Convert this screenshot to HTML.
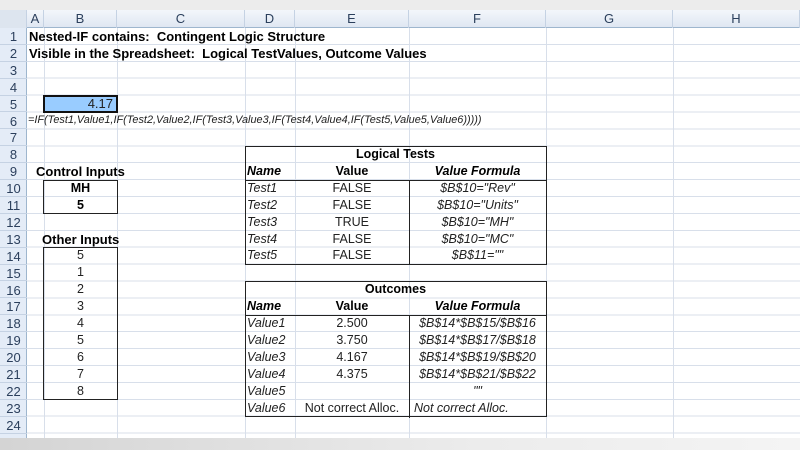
<!DOCTYPE html>
<html><head><style>
*{margin:0;padding:0;box-sizing:border-box}
body{width:800px;height:450px;overflow:hidden;background:#fff;font-family:"Liberation Sans",Arial,sans-serif;position:relative}
#grid{position:absolute;left:0;top:27.7px;width:800px;height:412px;
background-image:repeating-linear-gradient(to bottom,transparent 0,transparent 15.9px,#d8dfea 15.9px,#d8dfea 16.9px);}
.v{position:absolute;top:10px;height:430px;width:1px;background:#d8dfea}
#top{position:absolute;left:0;top:0;width:800px;height:10px;background:#ececec}
#colh{position:absolute;left:0;top:10px;width:800px;height:18px;background:linear-gradient(#f3f6fb,#dfe7f2);border-bottom:1px solid #9eb6ce}
.ch{position:absolute;top:10px;height:18px;line-height:18px;text-align:center;font-size:13px;color:#2b3f5c;border-right:1px solid #c5d2e3}
#rowh{position:absolute;left:0;top:28px;width:27px;height:412px;background:#e4ecf7;border-right:1px solid #9eb6ce}
.rh{position:absolute;left:0;width:27px;height:16.9px;line-height:17.5px;text-align:center;font-size:13px;color:#2b3f5c;border-bottom:1px solid #c5d2e3}
.t{position:absolute;height:16.9px;line-height:17.8px;font-size:12.5px;color:#222;white-space:nowrap}
.b{font-weight:bold;color:#000}
.i{font-style:italic}
.c{text-align:center}
.box{position:absolute;border:1px solid #222}
.ln{position:absolute;background:#222}
#bot{position:absolute;left:0;top:438px;width:800px;height:12px;background:linear-gradient(90deg,#d4d4d4,#ececec 60%,#f4f4f4)}
</style></head><body>
<div id="top"></div>
<div id="grid"></div>
<div class="v" style="left:44px"></div><div class="v" style="left:117px"></div><div class="v" style="left:245px"></div><div class="v" style="left:295px"></div><div class="v" style="left:409px"></div><div class="v" style="left:546px"></div><div class="v" style="left:673px"></div>
<div id="colh"></div>
<div class="ch" style="left:0;width:27px;background:#dde5ef"></div>
<div class="ch" style="left:27px;width:17px">A</div>
<div class="ch" style="left:44px;width:73px">B</div>
<div class="ch" style="left:117px;width:128px">C</div>
<div class="ch" style="left:245px;width:50px">D</div>
<div class="ch" style="left:295px;width:114px">E</div>
<div class="ch" style="left:409px;width:137px">F</div>
<div class="ch" style="left:546px;width:127px">G</div>
<div class="ch" style="left:673px;width:127px">H</div>
<div id="rowh">
<div class="rh" style="top:0">1</div><div class="rh" style="top:16.9px">2</div><div class="rh" style="top:33.8px">3</div><div class="rh" style="top:50.7px">4</div><div class="rh" style="top:67.6px">5</div><div class="rh" style="top:84.5px">6</div><div class="rh" style="top:101.4px">7</div><div class="rh" style="top:118.3px">8</div><div class="rh" style="top:135.2px">9</div><div class="rh" style="top:152.1px">10</div><div class="rh" style="top:169px">11</div><div class="rh" style="top:185.9px">12</div><div class="rh" style="top:202.8px">13</div><div class="rh" style="top:219.7px">14</div><div class="rh" style="top:236.6px">15</div><div class="rh" style="top:253.5px">16</div><div class="rh" style="top:270.4px">17</div><div class="rh" style="top:287.3px">18</div><div class="rh" style="top:304.2px">19</div><div class="rh" style="top:321.1px">20</div><div class="rh" style="top:338px">21</div><div class="rh" style="top:354.9px">22</div><div class="rh" style="top:371.8px">23</div><div class="rh" style="top:388.7px">24</div><div class="rh" style="top:405.6px">25</div>
</div>

<div class="t b" style="left:29px;top:27.7px;font-size:13px">Nested-IF contains:&nbsp; Contingent Logic Structure</div>
<div class="t b" style="left:29px;top:44.6px;font-size:13px">Visible in the Spreadsheet:&nbsp; Logical TestValues, Outcome Values</div>
<div style="position:absolute;left:43px;top:94.5px;width:75px;height:18px;background:#99ccff;border:2px solid #111"></div>
<div class="t" style="left:44px;top:95.3px;width:69px;text-align:right;font-size:13px">4.17</div>
<div class="t i" style="left:28px;top:112.2px;font-size:10.9px">=IF(Test1,Value1,IF(Test2,Value2,IF(Test3,Value3,IF(Test4,Value4,IF(Test5,Value5,Value6)))))</div>

<div class="t b" style="left:36px;top:162.9px;font-size:13px">Control Inputs</div>
<div class="box" style="left:43px;top:179.8px;width:75px;height:34px"></div>
<div class="t b c" style="left:44px;top:179.8px;width:73px">MH</div>
<div class="t b c" style="left:44px;top:196.7px;width:73px">5</div>
<div class="t b" style="left:42px;top:230.5px;font-size:13px">Other Inputs</div>
<div class="box" style="left:43px;top:247.4px;width:75px;height:153px"></div>
<div class="t c" style="left:44px;top:247.4px;width:73px">5</div>
<div class="t c" style="left:44px;top:264.3px;width:73px">1</div>
<div class="t c" style="left:44px;top:281.2px;width:73px">2</div>
<div class="t c" style="left:44px;top:298.1px;width:73px">3</div>
<div class="t c" style="left:44px;top:315px;width:73px">4</div>
<div class="t c" style="left:44px;top:331.9px;width:73px">5</div>
<div class="t c" style="left:44px;top:348.8px;width:73px">6</div>
<div class="t c" style="left:44px;top:365.7px;width:73px">7</div>
<div class="t c" style="left:44px;top:382.6px;width:73px">8</div>

<div class="box" style="left:245px;top:146px;width:302px;height:119px;background:transparent"></div>
<div class="ln" style="left:245px;top:179.6px;width:302px;height:1px"></div>
<div class="ln" style="left:409px;top:179.6px;width:1px;height:85px"></div>
<div class="t b c" style="left:245px;top:146px;width:301px">Logical Tests</div>
<div class="t b i" style="left:247px;top:162.9px">Name</div>
<div class="t b c" style="left:295px;top:162.9px;width:114px">Value</div>
<div class="t b i c" style="left:409px;top:162.9px;width:137px">Value Formula</div>
<div class="t i" style="left:247px;top:179.8px">Test1</div><div class="t c" style="left:295px;top:179.8px;width:114px">FALSE</div><div class="t i c" style="left:409px;top:179.8px;width:137px">$B$10="Rev"</div>
<div class="t i" style="left:247px;top:196.7px">Test2</div><div class="t c" style="left:295px;top:196.7px;width:114px">FALSE</div><div class="t i c" style="left:409px;top:196.7px;width:137px">$B$10="Units"</div>
<div class="t i" style="left:247px;top:213.6px">Test3</div><div class="t c" style="left:295px;top:213.6px;width:114px">TRUE</div><div class="t i c" style="left:409px;top:213.6px;width:137px">$B$10="MH"</div>
<div class="t i" style="left:247px;top:230.5px">Test4</div><div class="t c" style="left:295px;top:230.5px;width:114px">FALSE</div><div class="t i c" style="left:409px;top:230.5px;width:137px">$B$10="MC"</div>
<div class="t i" style="left:247px;top:247.4px">Test5</div><div class="t c" style="left:295px;top:247.4px;width:114px">FALSE</div><div class="t i c" style="left:409px;top:247.4px;width:137px">$B$11=""</div>

<div class="box" style="left:245px;top:281.2px;width:302px;height:136px"></div>
<div class="ln" style="left:245px;top:314.8px;width:302px;height:1px"></div>
<div class="ln" style="left:409px;top:314.8px;width:1px;height:103px"></div>
<div class="t b c" style="left:245px;top:281.2px;width:301px">Outcomes</div>
<div class="t b i" style="left:247px;top:298.1px">Name</div>
<div class="t b c" style="left:295px;top:298.1px;width:114px">Value</div>
<div class="t b i c" style="left:409px;top:298.1px;width:137px">Value Formula</div>
<div class="t i" style="left:247px;top:315px">Value1</div><div class="t c" style="left:295px;top:315px;width:114px">2.500</div><div class="t i c" style="left:409px;top:315px;width:137px">$B$14*$B$15/$B$16</div>
<div class="t i" style="left:247px;top:331.9px">Value2</div><div class="t c" style="left:295px;top:331.9px;width:114px">3.750</div><div class="t i c" style="left:409px;top:331.9px;width:137px">$B$14*$B$17/$B$18</div>
<div class="t i" style="left:247px;top:348.8px">Value3</div><div class="t c" style="left:295px;top:348.8px;width:114px">4.167</div><div class="t i c" style="left:409px;top:348.8px;width:137px">$B$14*$B$19/$B$20</div>
<div class="t i" style="left:247px;top:365.7px">Value4</div><div class="t c" style="left:295px;top:365.7px;width:114px">4.375</div><div class="t i c" style="left:409px;top:365.7px;width:137px">$B$14*$B$21/$B$22</div>
<div class="t i" style="left:247px;top:382.6px">Value5</div><div class="t i c" style="left:409px;top:382.6px;width:137px">""</div>
<div class="t i" style="left:247px;top:399.5px">Value6</div><div class="t c" style="left:295px;top:399.5px;width:114px">Not correct Alloc.</div><div class="t i" style="left:414px;top:399.5px">Not correct Alloc.</div>

<div id="bot"></div>
</body></html>
